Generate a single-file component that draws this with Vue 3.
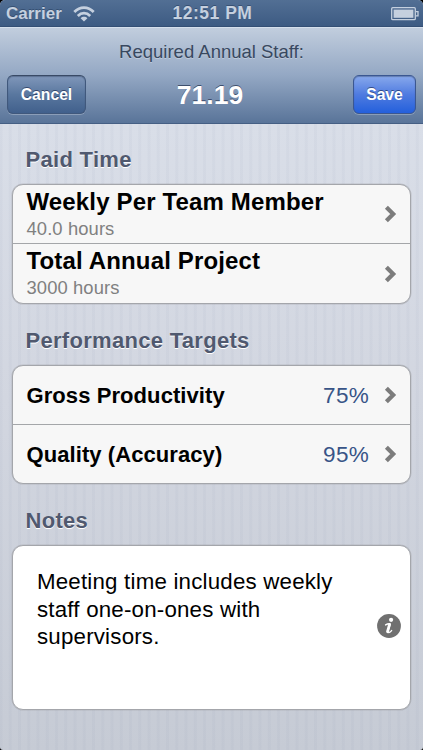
<script setup>
const sections = [
  {
    title: 'Paid Time',
    rows: [
      { label: 'Weekly Per Team Member', detail: '40.0 hours' },
      { label: 'Total Annual Project', detail: '3000 hours' },
    ],
  },
  {
    title: 'Performance Targets',
    rows: [
      { label: 'Gross Productivity', value: '75%' },
      { label: 'Quality (Accuracy)', value: '95%' },
    ],
  },
]
</script>

<template>
  <div class="device">
    <div class="screen">
      <header class="status">
        <div class="carrier">
          <span>Carrier</span>
          <svg class="wifi" width="22" height="16" viewBox="0 0 22 16">
            <path d="M1.300 6C7 .2 15 .2 20.700 6" />
            <path d="M4.800 9.900C8.400 6.300 13.600 6.300 17.200 9.900" />
            <path class="dot" d="M11 15.600L7.600 12.200C9.500 10.300 12.500 10.300 14.400 12.200Z" />
          </svg>
        </div>
        <span class="clock">12:51 PM</span>
        <svg class="battery" width="28" height="14" viewBox="0 0 28 14">
          <rect x=".7" y=".7" width="23.600" height="12" rx="1" class="shell" />
          <rect x="2.600" y="2.600" width="19.800" height="8.200" class="charge" />
          <path d="M25 4.600h2v4.200h-2" class="shell" />
        </svg>
      </header>

      <nav class="navbar">
        <div class="prompt">Required Annual Staff:</div>
        <div class="bar">
          <button class="btn cancel">Cancel</button>
          <h1>71.19</h1>
          <button class="btn save">Save</button>
        </div>
      </nav>

      <main>
        <section v-for="s in sections" :key="s.title">
          <h2>{{ s.title }}</h2>
          <div class="card">
            <div v-for="r in s.rows" :key="r.label" class="row">
              <div class="text" :class="{ double: r.detail }">
                <div class="label">{{ r.label }}</div>
                <div v-if="r.detail" class="detail">{{ r.detail }}</div>
              </div>
              <span v-if="r.value" class="value">{{ r.value }}</span>
              <svg class="chevron" width="13" height="18" viewBox="0 0 13 18">
                <path d="M2.400 2.200L9.200 9L2.400 15.800" />
              </svg>
            </div>
          </div>
        </section>
        <section>
          <h2>Notes</h2>
          <div class="card notes">
            <p>Meeting time includes weekly staff one-on-ones with supervisors.</p>
            <svg class="info" width="24" height="24" viewBox="0 0 24 24">
              <circle cx="12" cy="12" r="11.900" fill="#707070" />
              <circle cx="14.100" cy="5.800" r="2.100" fill="#fff" />
              <path d="M8.600 10.900C10.300 9.900 12 9.700 13.300 9.900L10.900 17.300C10.400 19.300 12.800 18.900 14.600 16.600" fill="none" stroke="#fff" stroke-width="1.400" stroke-linecap="round" stroke-linejoin="round" />
              <path d="M12.500 10.700L10.500 17.700" stroke="#fff" stroke-width="2.800" stroke-linecap="round" />
            </svg>
          </div>
        </section>
      </main>
    </div>
  </div>
</template>

<style>
body {
  margin: 0;
  background: #000;
}
</style>

<style scoped>
* {
  box-sizing: border-box;
}
.device {
  width: 423px;
  height: 750px;
  background: #000;
  font-family: "Liberation Sans", Arial, sans-serif;
}
.screen {
  height: 750px;
  overflow: hidden;
  border-radius: 5px 5px 3px 3px;
  background:
    repeating-linear-gradient(90deg, rgba(100, 115, 150, 0.045) 0 2px, transparent 3px 8.250px, rgba(100, 115, 150, 0.045) 9.250px),
    linear-gradient(#d9dee8 124px, #d2d6e0 400px, #c6cbd5 750px);
}
.status {
  display: grid;
  grid-template-columns: 1fr auto 1fr;
  align-items: center;
  height: 26px;
  padding: 1px 4px 0 6px;
  background: linear-gradient(#526f94, #3d5b83);
  color: #c5d0df;
  font-weight: bold;
  font-size: 17px;
  text-shadow: 0 -1px 0 rgba(20, 40, 70, 0.4);
}
.carrier {
  display: flex;
  align-items: center;
  gap: 11px;
}
.wifi {
  fill: none;
  stroke: #c5d0df;
  stroke-width: 2.800px;
}
.wifi .dot {
  fill: #c5d0df;
  stroke: none;
}
.clock {
  font-size: 17.500px;
  letter-spacing: 0.500px;
}
.battery {
  justify-self: end;
}
.shell {
  fill: none;
  stroke: #c5d0df;
  stroke-width: 1.300px;
}
.charge {
  fill: #c5d0df;
}
.navbar {
  height: 98px;
  border-top: 1px solid #344f75;
  border-bottom: 1px solid #455f84;
  box-shadow: inset 0 1px 0 #d5dfec;
  background: linear-gradient(#c2cede, #94a8c4 50%, #597499);
}
.prompt {
  height: 48px;
  padding-top: 14px;
  line-height: 22px;
  text-align: center;
  font-size: 18.500px;
  color: #384860;
  text-shadow: 0 1px 0 rgba(255, 255, 255, 0.3);
}
.bar {
  display: grid;
  grid-template-columns: 79px 1fr 79px;
  align-items: start;
  padding: 0 7px;
}
h1 {
  margin: 4px 0 0;
  padding-right: 3px;
  text-align: center;
  font-size: 26.500px;
  line-height: 32px;
  color: #fff;
  text-shadow: 0 -1px 0 rgba(30, 45, 75, 0.7);
}
.btn {
  height: 39px;
  padding: 1px 0 0;
  border: 1px solid #40587c;
  border-top-color: #394a66;
  border-radius: 6px;
  font: bold 15.700px "Liberation Sans", Arial, sans-serif;
  color: #fff;
  text-shadow: 0 -1px 0 rgba(20, 35, 70, 0.6);
  box-shadow: 0 1px 0 rgba(255, 255, 255, 0.25), inset 0 1px 1px rgba(30, 45, 75, 0.35);
}
.cancel {
  width: 79px;
  background: linear-gradient(#8097ba, #59779f 50%, #41608c);
}
.save {
  width: 63px;
  justify-self: end;
  border-color: #3b5791;
  background: linear-gradient(#88a9ec, #4f7be0 50%, #2460dc);
}
main {
  padding: 0 12px;
}
h2 {
  margin: 0;
  height: 60px;
  padding: 23px 0 0 13.500px;
  font-size: 22px;
  line-height: 26px;
  letter-spacing: 0.300px;
  color: #50596f;
  text-shadow: 0 1px 0 #fff;
}
section + section h2 {
  height: 61px;
  padding-top: 24px;
}
.card {
  width: 399px;
  height: 119.500px;
  border: 1px solid #a4a6ab;
  border-radius: 11px;
  background: #f7f7f7;
  box-shadow: 0 0 0 0.500px rgba(150, 152, 158, 0.4);
  overflow: hidden;
}
.row {
  display: flex;
  align-items: center;
  height: 58px;
  padding: 0 13px 0 13.500px;
}
.row + .row {
  height: 60px;
  border-top: 1px solid #a4a6a9;
}
.text {
  flex: 1;
  padding-top: 2px;
  font-weight: bold;
  font-size: 22px;
  line-height: 28px;
  letter-spacing: 0.080px;
  white-space: nowrap;
}
.double {
  font-size: 24px;
  letter-spacing: 0.150px;
  align-self: flex-start;
  padding-top: 3px;
}
.detail {
  padding-top: 1px;
  font-size: 18.400px;
  line-height: 24px;
  letter-spacing: 0.100px;
  font-weight: normal;
  color: #808080;
}
.value {
  margin-right: 15px;
  padding-top: 2px;
  font-size: 22.500px;
  letter-spacing: 0.300px;
  color: #385487;
}
.chevron {
  fill: none;
  stroke: #7c7c7c;
  stroke-width: 4.200px;
}
.notes {
  display: flex;
  align-items: center;
  height: 165px;
  padding: 0 9px 4px 24px;
  background: #fff;
}
.notes p {
  flex: 1;
  align-self: flex-start;
  margin: 22px 20px 0 0;
  font-size: 22.300px;
  line-height: 27.700px;
  letter-spacing: 0.200px;
  color: #000;
}
.info {
  flex: none;
}
</style>
